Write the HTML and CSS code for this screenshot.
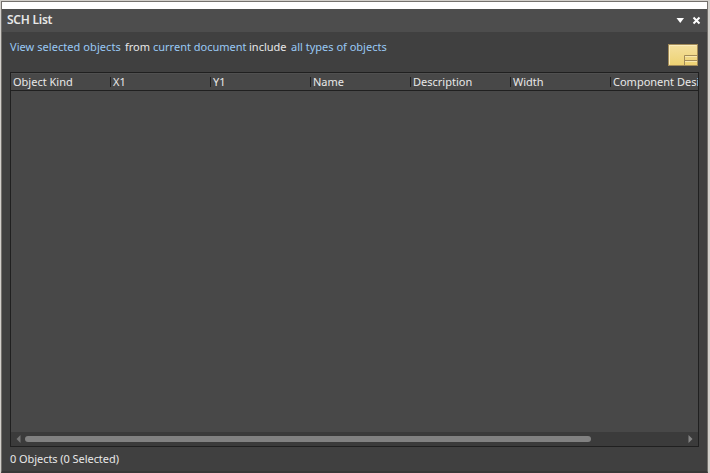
FILE: index.html
```html
<!DOCTYPE html>
<html lang="en">
<head>
<meta charset="utf-8">
<title>SCH List</title>
<link rel="stylesheet" href="styles.css">
</head>
<body>
<div class="panel">
  <header class="titlebar">
    <h1>SCH List</h1>
    <svg class="controls" width="26" height="9" viewBox="0 0 26 9">
      <path d="M1.500 2h7.500L5.250 7z" fill="#fff"/>
      <path d="M18.500 1.500l6 6M24.500 1.500l-6 6" stroke="#fff" stroke-width="2"/>
    </svg>
  </header>
  <div class="toolbar">
    <p class="filter"><a class="scope">View selected objects</a><span class="from">from</span><a class="document">current document</a><span class="include">include</span><a class="types">all types of objects</a></p>
    <svg class="note" width="30" height="22" viewBox="0 0 30 22">
      <defs><linearGradient id="paper" x1="0" y1="0" x2="0" y2="1"><stop offset="0" stop-color="#f4e0a0"/><stop offset="1" stop-color="#edd272"/></linearGradient></defs>
      <rect x=".5" y=".5" width="29" height="21" fill="url(#paper)" stroke="#a28b58"/>
      <path d="M1.500 20.500v-19h27" fill="none" stroke="#faedbd"/>
      <path d="M16.500 21V11.500H30M16.500 16.500H30" fill="none" stroke="#a28b58"/>
      <path d="M17 12.500h12M17 17.500h12" stroke="#f8e8ad"/>
    </svg>
  </div>
  <div class="table">
    <div class="head">
      <span class="kind">Object Kind</span><span>X1</span><span>Y1</span><span>Name</span><span>Description</span><span>Width</span><span>Component Desi</span>
    </div>
    <div class="rows"></div>
    <div class="scrollbar">
      <svg width="5" height="8" viewBox="0 0 5 8"><path d="M4.500 0v8L.500 4z" fill="#747474"/></svg>
      <div class="track"><div class="thumb"></div></div>
      <svg width="5" height="8" viewBox="0 0 5 8"><path d="M.500 0v8l4-4z" fill="#858585"/></svg>
    </div>
  </div>
  <footer>0 Objects (0 Selected)</footer>
</div>
</body>
</html>
```

FILE: styles.css
```css
* { box-sizing: border-box; }
body {
  margin: 0;
  width: 710px;
  height: 473px;
  padding: 1px 2px 0 1px;
  overflow: hidden;
  background: #d3d0cb;
  font: 11px/16px "Noto Sans", "Open Sans", sans-serif;
  color: #e8e8e8;
}
.panel {
  height: 472px;
  display: flex;
  flex-direction: column;
  border: 1px solid #74716d;
  border-bottom: 2px solid #383838;
  background: #404040;
}
.titlebar {
  height: 30px;
  flex: none;
  display: flex;
  align-items: center;
  justify-content: space-between;
  padding: 0 6px 0 5px;
  border-top: 7px solid #fff;
  background: #4d4d4d;
}
h1 { margin: 0; padding-bottom: 2px; font-size: 12px; line-height: 16px; font-weight: 600; letter-spacing: -.25px; }
.toolbar {
  height: 40px;
  flex: none;
  display: flex;
  justify-content: space-between;
  padding: 7px 9px 0 8px;
}
.filter { margin: 0; display: flex; white-space: nowrap; }
.filter a { color: #99c9f5; }
.filter .scope { width: 115px; letter-spacing: .06px; }
.from { width: 28px; }
.document { width: 96px; }
.include { width: 42px; }
.note { margin-top: 5px; }
.table {
  height: 375px;
  flex: none;
  margin: 0 8px;
  border: 1px solid #202020;
  display: flex;
  flex-direction: column;
  overflow: hidden;
}
.head {
  height: 18px;
  flex: none;
  display: grid;
  grid-template-columns: 99px repeat(5, 100px) 88px;
  align-items: center;
  border-top: 1px solid #505050;
  border-bottom: 1px solid #202020;
  background: #484848;
  white-space: nowrap;
}
.head span { height: 10px; line-height: 10px; padding-left: 2px; border-left: 1px solid #202020; }
.head .kind { border: 0; }
.rows { flex: 1; background: #484848; }
.scrollbar {
  height: 14px;
  flex: none;
  display: flex;
  align-items: center;
  padding: 0 5px;
  background: #3b3b3b;
}
.track { flex: 1; padding-left: 4px; }
.thumb { width: 566px; height: 6px; border-radius: 3px; background: #818181; }
footer { padding: 4px 8px 0; letter-spacing: -.06px; }
```
